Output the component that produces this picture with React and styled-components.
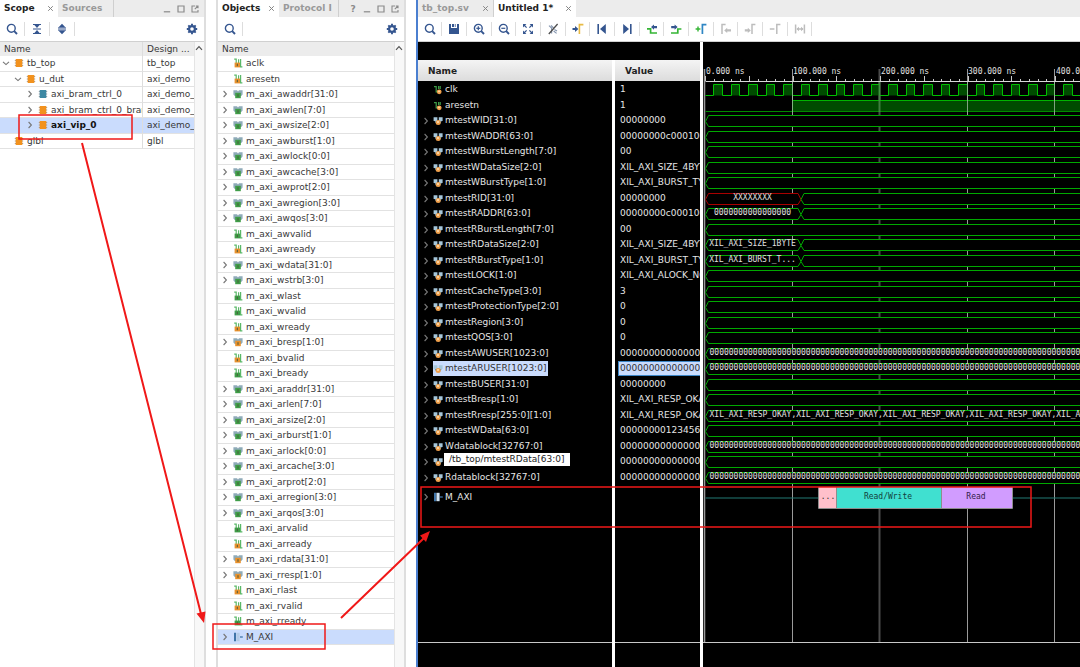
import React, { useState } from "react";
import styled, { createGlobalStyle } from "styled-components";

const scopeRows = [
  { name: "tb_top", unit: "tb_top", level: 0, open: true, expandable: true },
  { name: "u_dut", unit: "axi_demo", level: 1, open: true, expandable: true },
  { name: "axi_bram_ctrl_0", unit: "axi_demo_a", level: 2, expandable: true, color: "#3d88a3" },
  { name: "axi_bram_ctrl_0_bram", unit: "axi_demo_a", level: 2, expandable: true },
  { name: "axi_vip_0", unit: "axi_demo_a", level: 2, expandable: true, bold: true },
  { name: "glbl", unit: "glbl", level: 0 },
];

// [name, direction]
const objectRows = [
  ["aclk", "in"],
  ["aresetn", "in"],
  ["m_axi_awaddr[31:0]", "out"],
  ["m_axi_awlen[7:0]", "out"],
  ["m_axi_awsize[2:0]", "out"],
  ["m_axi_awburst[1:0]", "out"],
  ["m_axi_awlock[0:0]", "out"],
  ["m_axi_awcache[3:0]", "out"],
  ["m_axi_awprot[2:0]", "out"],
  ["m_axi_awregion[3:0]", "out"],
  ["m_axi_awqos[3:0]", "out"],
  ["m_axi_awvalid", "out"],
  ["m_axi_awready", "in"],
  ["m_axi_wdata[31:0]", "out"],
  ["m_axi_wstrb[3:0]", "out"],
  ["m_axi_wlast", "out"],
  ["m_axi_wvalid", "out"],
  ["m_axi_wready", "in"],
  ["m_axi_bresp[1:0]", "in"],
  ["m_axi_bvalid", "in"],
  ["m_axi_bready", "out"],
  ["m_axi_araddr[31:0]", "out"],
  ["m_axi_arlen[7:0]", "out"],
  ["m_axi_arsize[2:0]", "out"],
  ["m_axi_arburst[1:0]", "out"],
  ["m_axi_arlock[0:0]", "out"],
  ["m_axi_arcache[3:0]", "out"],
  ["m_axi_arprot[2:0]", "out"],
  ["m_axi_arregion[3:0]", "out"],
  ["m_axi_arqos[3:0]", "out"],
  ["m_axi_arvalid", "out"],
  ["m_axi_arready", "in"],
  ["m_axi_rdata[31:0]", "in"],
  ["m_axi_rresp[1:0]", "in"],
  ["m_axi_rlast", "in"],
  ["m_axi_rvalid", "in"],
  ["m_axi_rready", "out"],
  ["M_AXI", "intf"],
];

const zeros = "0".repeat(78);
const okays = Array(5).fill("XIL_AXI_RESP_OKAY").join(",");

const waveRows = [
  { name: "clk", value: "1", kind: "clock" },
  { name: "aresetn", value: "1", kind: "level" },
  { name: "mtestWID[31:0]", value: "00000000" },
  { name: "mtestWADDR[63:0]", value: "00000000c000100" },
  { name: "mtestWBurstLength[7:0]", value: "00" },
  { name: "mtestWDataSize[2:0]", value: "XIL_AXI_SIZE_4BYTE" },
  { name: "mtestWBurstType[1:0]", value: "XIL_AXI_BURST_TYP" },
  { name: "mtestRID[31:0]", value: "00000000", first: "XXXXXXXX", unknown: true },
  { name: "mtestRADDR[63:0]", value: "00000000c000100", first: "0000000000000000" },
  { name: "mtestRBurstLength[7:0]", value: "00" },
  { name: "mtestRDataSize[2:0]", value: "XIL_AXI_SIZE_4BYTE", first: "XIL_AXI_SIZE_1BYTE" },
  { name: "mtestRBurstType[1:0]", value: "XIL_AXI_BURST_TYP", first: "XIL_AXI_BURST_T..." },
  { name: "mtestLOCK[1:0]", value: "XIL_AXI_ALOCK_NOL" },
  { name: "mtestCacheType[3:0]", value: "3" },
  { name: "mtestProtectionType[2:0]", value: "0" },
  { name: "mtestRegion[3:0]", value: "0" },
  { name: "mtestQOS[3:0]", value: "0" },
  { name: "mtestAWUSER[1023:0]", value: "00000000000000", text: zeros },
  { name: "mtestARUSER[1023:0]", value: "00000000000000", text: zeros },
  { name: "mtestBUSER[31:0]", value: "00000000" },
  { name: "mtestBresp[1:0]", value: "XIL_AXI_RESP_OKAY" },
  { name: "mtestRresp[255:0][1:0]", value: "XIL_AXI_RESP_OKAY", text: okays },
  { name: "mtestWData[63:0]", value: "00000000123456" },
  { name: "Wdatablock[32767:0]", value: "00000000000000", text: zeros },
  { name: "mtestRData[63:0]", value: "00000000000000", tip: "/tb_top/mtestRData[63:0]" },
  { name: "Rdatablock[32767:0]", value: "00000000000000", text: zeros },
];

const NAVY = "#34558f";
const MUTED = "#bdbdbd";

/* ---------- icons ---------- */

const Svg = ({ size = 12, children }) => (
  <svg width={size} height={size} viewBox={`0 0 ${size} ${size}`} fill="none" aria-hidden="true">
    {children}
  </svg>
);

const SearchIcon = ({ sign }) => (
  <Svg>
    <circle cx="5.3" cy="5.3" r="3.9" stroke={NAVY} strokeWidth="1.4" />
    <path d="M8.2 8.2L11 11" stroke={NAVY} strokeWidth="1.9" />
    {sign && <path d="M3.3 5.3H7.3" stroke={NAVY} strokeWidth="1.2" />}
    {sign === "plus" && <path d="M5.3 3.3V7.3" stroke={NAVY} strokeWidth="1.2" />}
  </Svg>
);

const CollapseIcon = () => (
  <Svg>
    <path d="M2 1.5H10M2 10.5H10M2 6H10" stroke={NAVY} strokeWidth="1.1" />
    <path d="M3.4 2L6 5L8.6 2ZM3.4 10L6 7L8.6 10Z" fill={NAVY} />
  </Svg>
);

const ExpandIcon = () => (
  <Svg>
    <path d="M2 5H10M2 7H10" stroke={NAVY} strokeWidth="1.1" />
    <path d="M2.4 4.6L6 .8L9.6 4.6ZM2.4 7.4L6 11.2L9.6 7.4Z" fill={NAVY} />
  </Svg>
);

const GearIcon = () => (
  <Svg>
    <circle cx="6" cy="6" r="2.9" stroke={NAVY} strokeWidth="2.2" />
    <path
      d="M6 .8V2.6M6 9.4V11.2M.8 6H2.6M9.4 6H11.2M2.3 2.3L3.6 3.6M8.4 8.4L9.7 9.7M2.3 9.7L3.6 8.4M8.4 3.6L9.7 2.3"
      stroke={NAVY}
      strokeWidth="1.9"
    />
  </Svg>
);

const SaveIcon = () => (
  <Svg>
    <path d="M1 1H3V5H9V1H11V11H1Z" fill={NAVY} />
    <path d="M4 1H6.2V4H4ZM7.4 1H8V4H7.4Z" fill={NAVY} />
  </Svg>
);

const FitIcon = () => (
  <Svg>
    <path d="M1 1H4.4L1 4.4ZM11 1V4.4L7.6 1ZM1 11V7.6L4.4 11ZM11 11H7.6L11 7.6Z" fill={NAVY} />
    <path d="M2 2L4.6 4.6M10 2L7.4 4.6M2 10L4.6 7.4M10 10L7.4 7.4" stroke={NAVY} strokeWidth="1.2" />
  </Svg>
);

const UnlinkIcon = () => (
  <Svg>
    <path d="M2 2.6L4.6 5V10.4M4 2.4L6.6 5M6.6 8L9.6 10.4M7.4 6.4L10 8" stroke="#8797b0" strokeWidth="1.2" />
    <path d="M10.6 1L1.8 11" stroke="#4c4c4c" strokeWidth="1.3" />
  </Svg>
);

const GotoCursorIcon = () => (
  <Svg>
    <path d="M.5 5H3V3L6.4 6L3 9V7H.5Z" fill={NAVY} />
    <path d="M7.4 11V1.6H11.4" stroke="#e8bb45" strokeWidth="1.6" />
  </Svg>
);

const FirstIcon = () => (
  <Svg>
    <path d="M2.2 1V11" stroke={NAVY} strokeWidth="1.6" />
    <path d="M9.8 1V11L4 6Z" fill={NAVY} />
  </Svg>
);

const LastIcon = () => (
  <Svg>
    <path d="M9.8 1V11" stroke={NAVY} strokeWidth="1.6" />
    <path d="M2.2 1V11L8 6Z" fill={NAVY} />
  </Svg>
);

const PrevEdgeIcon = () => (
  <Svg>
    <path d="M1 5.8H4.6V10H11" stroke="#35b535" strokeWidth="1.7" />
    <path d="M5 4L8 1.4V3H11V5.2H8V6.8Z" fill={NAVY} />
  </Svg>
);

const NextEdgeIcon = () => (
  <Svg>
    <path d="M1 10H7.8V6H11.4" stroke="#35b535" strokeWidth="1.7" />
    <path d="M7.6 4L4.6 1.4V3H1.2V5.2H4.6V6.8Z" fill={NAVY} />
  </Svg>
);

const AddMarkerIcon = () => (
  <Svg>
    <path d="M.6 6H5.4M3 3.6V8.4" stroke="#35b535" strokeWidth="1.4" />
    <path d="M7.4 11V1.6H11.4" stroke="#2f86c4" strokeWidth="1.7" />
  </Svg>
);

const PrevMarkerIcon = () => (
  <Svg>
    <path d="M2 11V1.6H5.6" stroke={MUTED} strokeWidth="1.5" />
    <path d="M4.2 7.4L7.2 4.8V6.2H11V8.6H7.2V10Z" fill={MUTED} />
  </Svg>
);

const NextMarkerIcon = () => (
  <Svg>
    <path d="M8 11V1.6H11.4" stroke={MUTED} strokeWidth="1.5" />
    <path d="M6.8 7.4L3.8 4.8V6.2H.8V8.6H3.8V10Z" fill={MUTED} />
  </Svg>
);

const RemoveMarkerIcon = () => (
  <Svg>
    <path d="M.8 6H5.4M7.8 11V1.6H11.4" stroke={MUTED} strokeWidth="1.5" />
  </Svg>
);

const SwapIcon = () => (
  <Svg>
    <path d="M1.6 1.6V10.4M10.4 1.6V10.4M3 6H9" stroke={MUTED} strokeWidth="1.5" />
    <path d="M2.4 6L5 3.8V8.2ZM9.6 6L7 3.8V8.2Z" fill={MUTED} />
  </Svg>
);

const CloseIcon = () => (
  <Svg size={7}>
    <path d="M1.2 1.2L5.8 5.8M5.8 1.2L1.2 5.8" stroke="#858585" />
  </Svg>
);

const MinimizeIcon = () => (
  <Svg size={8}>
    <path d="M.8 6.8H7.2" stroke="#8a8a8a" strokeWidth="1.2" />
  </Svg>
);

const MaximizeIcon = () => (
  <Svg size={8}>
    <path d="M1 1H7V7H1Z" stroke="#8a8a8a" strokeWidth="1.2" />
  </Svg>
);

const FloatIcon = () => (
  <Svg size={8}>
    <path d="M4 1H1V7H7V5M3.8 4.2L7 1M4.8 1H7V3.2" stroke="#8a8a8a" strokeWidth="1.1" />
  </Svg>
);

const Chevron = ({ open }) => (
  <Svg size={8}>
    <path d={open ? "M1 2.8L4 5.6L7 2.8" : "M2.6 1L5.4 4L2.6 7"} stroke="#777" strokeWidth="1.1" />
  </Svg>
);

const UpIcon = () => (
  <Svg size={8}>
    <path d="M1 5.8L4 2.6L7 5.8" stroke="#555" strokeWidth="1.2" />
  </Svg>
);

const ChipIcon = ({ color = "#f2921e" }) => (
  <Svg size={10}>
    <path d="M.8 2.5H9.2M.8 5H9.2M.8 7.5H9.2" stroke="#8a8a8a" strokeWidth=".8" />
    <path d="M1.7 1H8.3V9H1.7Z" fill={color} />
  </Svg>
);

const SignalIcon = ({ direction }) => {
  const fill = direction === "out" ? "#3f9d48" : "#e8912d";
  return (
    <Svg size={10}>
      <path d="M1.2 1.2H3.2V5M5.6 5V1.2M7.6 1V8.8H9.4" stroke="#5bb868" strokeWidth="1.2" />
      <path d="M1.6 4.6H7V9.4H1.6Z" fill={fill} />
      <path d="M4.3 5.8V8.2" stroke="#4d5b3b" />
    </Svg>
  );
};

const BusIcon = ({ direction }) => {
  const fill = direction === "out" ? "#3f9d48" : "#e8912d";
  return (
    <Svg size={10}>
      <path d="M.4 1.2H4L5 2.4L6 1.2H9.6V5.4L8.2 7H1.8L.4 5.4Z" fill="#8fabb9" />
      <path d="M2.2 3.8H7.8V9.2H2.2Z" fill={fill} />
      <path d="M5 5.2V7.8" stroke="#4d5b3b" />
    </Svg>
  );
};

const WaveSignalIcon = () => (
  <Svg size={10}>
    <path d="M1 1.6H3.2V7H4.6M5.6 4V1M7.2 1V4" stroke="#3f9d48" strokeWidth="1.2" />
    <circle cx="6.2" cy="6.8" r="2.4" fill="#f0a04b" />
    <circle cx="6" cy="6.4" r=".9" fill="#ffd9a4" />
  </Svg>
);

const WaveBusIcon = () => (
  <Svg size={10}>
    <path d="M.6 1.2H4.4V5H.6ZM5.8 1.2H9.6V5H5.8Z" fill="#a5c6da" />
    <path d="M1.6 5H8.6L7.4 7.6H3Z" fill="#6b93ab" />
    <circle cx="5.2" cy="6.4" r="2.5" fill="#f0a04b" />
    <circle cx="5" cy="6" r="1" fill="#ffe2ba" />
  </Svg>
);

const InterfaceIcon = ({ dark }) => (
  <Svg size={10}>
    <path d="M1 .8H3V9.2H1Z" fill="#3f74a8" />
    <path d="M3.4 .8H6.6V9.2H3.4Z" fill={dark ? "#cfe3f3" : "#b4cbe6"} />
    <path d="M7 5H9.8" stroke="#3f74a8" strokeWidth="1.3" />
  </Svg>
);

const waveTools = [
  ["Search", <SearchIcon />],
  ["Save waveform", <SaveIcon />],
  ["Zoom in", <SearchIcon sign="plus" />],
  ["Zoom out", <SearchIcon sign="minus" />],
  ["Zoom fit", <FitIcon />],
  ["Select area", <UnlinkIcon />],
  ["Go to cursor", <GotoCursorIcon />],
  ["Go to start", <FirstIcon />],
  ["Go to end", <LastIcon />],
  ["Previous transition", <PrevEdgeIcon />],
  ["Next transition", <NextEdgeIcon />],
  ["Add marker", <AddMarkerIcon />],
  ["Previous marker", <PrevMarkerIcon />],
  ["Next marker", <NextMarkerIcon />],
  ["Remove marker", <RemoveMarkerIcon />],
  ["Swap cursors", <SwapIcon />],
];

/* ---------- waveform chart ---------- */

const NS100 = 87.5;
const START = 2.5;
const FIRST_ROW = 40;
const FAR = 2600;
const rowTop = (i) => FIRST_ROW + Math.ceil(i * 15.5) + 2.5;
const crisp = (x) => Math.floor(x) + 0.5;

const Clock = ({ y }) => {
  let d = `M${START} ${y + 11}`;
  for (let x = START + 8; x < FAR; x += 17.5) {
    d += `H${crisp(x)}V${y}H${crisp(x + 8.75)}V${y + 11}`;
  }
  return <path d={d} fill="#004b00" stroke="#00c000" />;
};

const Bus = ({ y, row }) => {
  const swap = START + 95.5;
  const label = row.text || row.first;
  return (
    <g>
      {row.first ? (
        <>
          <path
            d={`M${START + 3} ${y}H${swap - 3}L${swap} ${y + 6}L${swap - 3} ${y + 11}H${START + 3}L${START} ${y + 6}Z`}
            fill="#000"
            stroke={row.unknown ? "#a80000" : "#00a800"}
          />
          <path
            d={`M${FAR} ${y}H${swap + 3}L${swap} ${y + 6}L${swap + 3} ${y + 11}H${FAR}`}
            fill="#000"
            stroke="#00a800"
          />
        </>
      ) : (
        <path
          d={`M${FAR} ${y}H${START + 3}L${START} ${y + 6}L${START + 3} ${y + 11}H${FAR}`}
          fill="#000"
          stroke="#00a800"
        />
      )}
      {label && (
        <text
          x={row.text ? START + 4 : START + 47}
          y={y + 6.5}
          textAnchor={row.text ? "start" : "middle"}
          fill="#e0e0e0"
        >
          {label}
        </text>
      )}
    </g>
  );
};

const WaveChart = () => {
  const marks = Array.from({ length: 28 }, (_, i) => i);
  return (
    <Chart>
      <path d={`M1.5 27V${FAR}`} stroke="#555" strokeWidth="2" />
      {marks.map((i) => {
        const x = Math.floor(START + i * NS100) - 0.5;
        return (
          <line
            key={i}
            x1={x}
            x2={x}
            y1="27"
            y2="100%"
            stroke={i === 2 ? "#4a4a4a" : "#9a9a9a"}
            strokeWidth={i === 2 ? 2 : 1}
          />
        );
      })}
      {marks.map((i) => (
        <text key={i} x={Math.round(START + i * NS100)} y="32" fill="#e0e0e0">
          {`${(i * 100).toFixed(3)} ns`}
        </text>
      ))}
      {Array.from({ length: 280 }, (_, i) => (
        <path
          key={i}
          d={`M${crisp(START + i * 8.75)} ${i % 5 === 0 ? 34 : 37}V39`}
          stroke="#c8c8c8"
        />
      ))}
      <path d={`M${START} 39.5H${FAR}`} stroke="#d8d8d8" />
      {waveRows.map((row, i) => {
        const y = rowTop(i);
        if (row.kind === "clock") return <Clock key={i} y={y} />;
        if (row.kind === "level") {
          const rise = START + 87;
          return (
            <g key={i}>
              <path d={`M${rise} ${y}H${FAR}V${y + 11}H${rise}Z`} fill="#004b00" stroke="#008a00" />
              <path d={`M${START} ${y + 11}H${rise}`} stroke="#008a00" />
              <path d={`M${rise} ${y + 11}V${y}H${FAR}`} stroke="#00b400" fill="none" />
            </g>
          );
        }
        return <Bus key={i} y={y} row={row} />;
      })}
      {[1, 2, 3, 4].map((i) => (
        <path
          key={i}
          d={`M${Math.floor(START + i * NS100) - 0.5} 40V70`}
          stroke={i === 2 ? "#4f8a4f" : "#9fb89f"}
          strokeWidth={i === 2 ? 2 : 1}
          strokeOpacity=".8"
        />
      ))}
      <path d={`M${START} 456H${FAR}`} stroke="#237a74" />
      <path d="M116 445H133V466H116Z" fill="#ffc0cb" />
      <path d="M133 445H238V466H133Z" fill="#40e0d0" />
      <path d="M238 445H309V466H238Z" fill="#d19cff" />
      <path d="M115.5 445V466.5H309.5V445M133.5 445V466M238.5 445V466" stroke="#8d8d8d" fill="none" />
      <text x="125" y="457" textAnchor="middle" fill="#333">...</text>
      <text x="185" y="457" textAnchor="middle" fill="#14403c">Read/Write</text>
      <text x="273" y="457" textAnchor="middle" fill="#33204a">Read</text>
    </Chart>
  );
};

/* ---------- page ---------- */

const WindowButtons = ({ help }) => (
  <ButtonGroup>
    {help && <PlainButton aria-label="Help">?</PlainButton>}
    <PlainButton aria-label="Minimize"><MinimizeIcon /></PlainButton>
    <PlainButton aria-label="Maximize"><MaximizeIcon /></PlainButton>
    <PlainButton aria-label="Float"><FloatIcon /></PlainButton>
  </ButtonGroup>
);

export default function App() {
  const [scopeSelected, setScopeSelected] = useState("axi_vip_0");
  const [objectSelected, setObjectSelected] = useState("M_AXI");
  const [waveSelected, setWaveSelected] = useState("mtestARUSER[1023:0]");

  return (
    <>
      <GlobalStyle />
      <Workspace>
        <Panel>
          <TabBar>
            <Tab $active $width={58}>Scope<CloseIcon /></Tab>
            <Tab $width={56}>Sources</Tab>
            <WindowButtons />
          </TabBar>
          <Toolbar>
            <ToolButton aria-label="Search"><SearchIcon /></ToolButton>
            <ToolButton aria-label="Collapse all"><CollapseIcon /></ToolButton>
            <ToolButton aria-label="Expand all"><ExpandIcon /></ToolButton>
            <SettingsButton aria-label="Settings"><GearIcon /></SettingsButton>
          </Toolbar>
          <Content>
            <Table>
              <colgroup>
                <NameCol />
                <col />
              </colgroup>
              <thead>
                <tr>
                  <HeadCell>Name</HeadCell>
                  <HeadCell>Design ...</HeadCell>
                </tr>
              </thead>
              <tbody>
                {scopeRows.map((row) => (
                  <BodyRow
                    key={row.name}
                    $selected={row.name === scopeSelected}
                    onClick={() => setScopeSelected(row.name)}
                  >
                    <BodyCell>
                      <TreeLabel $level={row.level} $bold={row.bold}>
                        <ChevronSlot>{row.expandable && <Chevron open={row.open} />}</ChevronSlot>
                        <ChipIcon color={row.color} />
                        <span>{row.name}</span>
                      </TreeLabel>
                    </BodyCell>
                    <BodyCell>
                      <UnitLabel>{row.unit}</UnitLabel>
                    </BodyCell>
                  </BodyRow>
                ))}
              </tbody>
            </Table>
            <ScrollTrack><UpIcon /></ScrollTrack>
          </Content>
        </Panel>

        <Panel>
          <TabBar>
            <Tab $active $width={61}>Objects<CloseIcon /></Tab>
            <Tab $width={60}>Protocol I</Tab>
            <WindowButtons help />
          </TabBar>
          <Toolbar>
            <ToolButton aria-label="Search"><SearchIcon /></ToolButton>
            <SettingsButton aria-label="Settings"><GearIcon /></SettingsButton>
          </Toolbar>
          <Content>
            <Table>
              <thead>
                <tr><HeadCell>Name</HeadCell></tr>
              </thead>
              <tbody>
                {objectRows.map(([name, direction]) => {
                  const isBus = name.includes("[");
                  return (
                    <BodyRow
                      key={name}
                      $selected={name === objectSelected}
                      onClick={() => setObjectSelected(name)}
                    >
                      <BodyCell>
                        <ObjectLabel>
                          <ChevronSlot>{(isBus || direction === "intf") && <Chevron />}</ChevronSlot>
                          {direction === "intf" ? (
                            <InterfaceIcon />
                          ) : isBus ? (
                            <BusIcon direction={direction} />
                          ) : (
                            <SignalIcon direction={direction} />
                          )}
                          <span>{name}</span>
                        </ObjectLabel>
                      </BodyCell>
                    </BodyRow>
                  );
                })}
              </tbody>
            </Table>
            <ScrollTrack><UpIcon /></ScrollTrack>
          </Content>
        </Panel>

        <WavePanel>
          <TabBar>
            <Tab $width={76}>tb_top.sv<CloseIcon /></Tab>
            <Tab $active $width={82}>Untitled 1*<CloseIcon /></Tab>
          </TabBar>
          <Toolbar>
            {waveTools.map(([label, icon]) => (
              <WaveButton key={label} aria-label={label}>{icon}</WaveButton>
            ))}
          </Toolbar>
          <WaveBody>
            <SignalPanes>
              <Pane>
                <PaneHead>Name</PaneHead>
                <PaneList>
                  {waveRows.map((row) => (
                    <WaveRow key={row.name} onClick={() => setWaveSelected(row.name)}>
                      <WaveChevron>{!row.kind && <Chevron />}</WaveChevron>
                      <WaveName $selected={row.name === waveSelected}>
                        {row.kind ? <WaveSignalIcon /> : <WaveBusIcon />}
                        {row.name}
                      </WaveName>
                      {row.tip && <Tip role="tooltip">{row.tip}</Tip>}
                    </WaveRow>
                  ))}
                  <InterfaceRow>
                    <WaveChevron><Chevron /></WaveChevron>
                    <WaveName><InterfaceIcon dark />M_AXI</WaveName>
                  </InterfaceRow>
                </PaneList>
              </Pane>
              <Pane>
                <PaneHead>Value</PaneHead>
                <PaneList>
                  {waveRows.map((row) => (
                    <WaveRow key={row.name} onClick={() => setWaveSelected(row.name)}>
                      <WaveValue $selected={row.name === waveSelected}>{row.value}</WaveValue>
                    </WaveRow>
                  ))}
                </PaneList>
              </Pane>
            </SignalPanes>
            <ChartPane>
              <WaveChart />
            </ChartPane>
          </WaveBody>
        </WavePanel>
      </Workspace>

      <Annotations aria-hidden="true">
        <g fill="none" stroke="#f01818" strokeWidth="1.5">
          <path d="M19 115H132V139H19ZM213 624H325V649H213ZM421 487H1031V527H421Z" />
          <path d="M82 143L201 614M341 618L424 538" strokeWidth="2" />
        </g>
        <path d="M204 623L196.5 613.5L205.5 611.5ZM430 531L426 542L420 535.5Z" fill="#f01818" />
      </Annotations>
    </>
  );
}

const GlobalStyle = createGlobalStyle`
  * {
    box-sizing: border-box;
  }
  body {
    margin: 0;
    background: #fff;
    color: #383838;
    font-family: "DejaVu Sans", sans-serif;
    font-size: 9px;
    line-height: 14px;
  }
  button {
    padding: 0;
    border: 0;
    background: none;
    font: inherit;
    color: inherit;
  }
  svg {
    display: block;
    flex: none;
  }
`;

const Workspace = styled.main`
  display: grid;
  grid-template-columns: 206px 190px minmax(0, 1fr);
  column-gap: 10px;
  height: 100vh;
  overflow: hidden;
`;

const Panel = styled.section`
  display: flex;
  flex-direction: column;
  min-width: 0;
  min-height: 0;
  border-right: 2px solid #dedede;

  & + & {
    border-left: 2px solid #dedede;
  }
`;

const WavePanel = styled(Panel)`
  border-right: 0;

  && {
    border-left: 2px solid #4b7fd0;
  }
`;

const TabBar = styled.div`
  display: flex;
  flex: none;
  height: 17px;
  background: #ececec;
`;

const Tab = styled.button`
  display: flex;
  align-items: center;
  justify-content: space-between;
  flex: none;
  width: ${(p) => p.$width}px;
  padding: 0 4px;
  line-height: 13px;
  font-weight: bold;
  white-space: nowrap;
  color: ${(p) => (p.$active ? "#222" : "#999")};
  background: ${(p) => (p.$active ? "#fff" : "transparent")};
  border-right: ${(p) => (p.$active ? "0" : "1px solid #cfcfcf")};
`;

const ButtonGroup = styled.div`
  display: flex;
  align-items: center;
  gap: 6px;
  margin-left: auto;
  padding-right: 5px;
`;

const PlainButton = styled.button`
  width: 8px;
  font-weight: bold;
  color: #8a8a8a;
`;

const Toolbar = styled.div`
  display: flex;
  align-items: center;
  flex: none;
  height: 25px;
  background: #fff;
  border-bottom: 1px solid #d0d0d0;
`;

const ToolButton = styled.button`
  display: flex;
  align-items: center;
  justify-content: center;
  flex: none;
  width: 25px;
  height: 14px;
  border-right: 1px solid #ddd;
`;

const SettingsButton = styled(ToolButton)`
  margin-left: auto;
  border-right: 0;
`;

const WaveButton = styled(ToolButton)`
  &:nth-child(3n + 1) {
    width: 24px;
  }
`;

const Content = styled.div`
  display: grid;
  grid-template-columns: minmax(0, 1fr) 10px;
  flex: 1;
  min-height: 0;
`;

const ScrollTrack = styled.div`
  padding-top: 2px;
  background: #f8f8f8;
  border-left: 1px solid #e4e4e4;
`;

const Table = styled.table`
  width: 100%;
  table-layout: fixed;
  border-collapse: separate;
  border-spacing: 0;
  align-self: start;
`;

const NameCol = styled.col`
  width: 142px;
`;

const HeadCell = styled.th`
  height: 14px;
  padding: 0 4px;
  overflow: hidden;
  text-align: left;
  font-weight: normal;
  background: #ececec;

  & + & {
    border-left: 1px solid #ddd;
  }
`;

const BodyCell = styled.td`
  padding: 0;
  overflow: hidden;
  vertical-align: top;
  white-space: nowrap;
  border-bottom: 1px solid #e2e2e2;

  & + & {
    border-left: 1px solid #ddd;
  }
`;

const BodyRow = styled.tr`
  height: 16px;
  cursor: default;
  background: ${(p) => (p.$selected ? "#cadcfd" : "#fff")};

  &:nth-child(even) {
    height: 15px;
  }
`;

const TreeLabel = styled.div`
  display: flex;
  align-items: center;
  padding-left: ${(p) => 2 + p.$level * 12}px;
  font-weight: ${(p) => (p.$bold ? "bold" : "normal")};
  color: ${(p) => (p.$bold ? "#111" : "inherit")};

  span:last-child {
    margin-left: 3px;
  }
`;

const ObjectLabel = styled(TreeLabel).attrs({ $level: 0 })`
  padding-left: 3px;
`;

const UnitLabel = styled.div`
  padding-left: 4px;
`;

const ChevronSlot = styled.span`
  width: 12px;
  flex: none;
`;

const WaveBody = styled.div`
  display: grid;
  grid-template-columns: 282px minmax(0, 1fr);
  flex: 1;
  min-height: 0;
  background: #000;
`;

const SignalPanes = styled.div`
  display: grid;
  grid-template-columns: 194px minmax(0, 1fr);
  column-gap: 3px;
  min-height: 0;
  background: #fff;
  border-top: 18px solid #000;
`;

const Pane = styled.div`
  display: flex;
  flex-direction: column;
  min-width: 0;
  min-height: 0;
  padding-bottom: 24px;
  background: #000;
`;

const PaneHead = styled.div`
  display: flex;
  align-items: center;
  flex: none;
  height: 21px;
  padding-left: 10px;
  font-weight: bold;
  color: #222;
  background: linear-gradient(#f4f4f4, #dcdcdc);
`;

const PaneList = styled.ul`
  flex: 1;
  min-height: 0;
  margin: 0;
  padding: 1px 0 0;
  list-style: none;
  overflow: hidden;
  color: #e6e6e6;
  border-bottom: 1px solid #c8c8c8;
`;

const WaveRow = styled.li`
  position: relative;
  display: flex;
  align-items: flex-start;
  height: 16px;
  white-space: nowrap;
  cursor: default;

  &:nth-child(even) {
    height: 15px;
  }
`;

const InterfaceRow = styled(WaveRow)`
  align-items: center;

  && {
    height: 24px;
  }
`;

const WaveChevron = styled.span`
  display: flex;
  align-items: center;
  flex: none;
  width: 15px;
  height: 15px;
  padding-left: 4px;
`;

const WaveName = styled.span`
  display: flex;
  align-items: center;
  gap: 2px;
  padding-right: 2px;
  line-height: 13px;
  color: ${(p) => (p.$selected ? "#333" : "inherit")};
  background: ${(p) => (p.$selected ? "#cadcfd" : "transparent")};
  border: solid transparent;
  border-width: 1px 0;
`;

const WaveValue = styled.span`
  flex: 1;
  min-width: 0;
  margin-left: 3px;
  padding-left: 1px;
  overflow: hidden;
  line-height: 13px;
  color: ${(p) => (p.$selected ? "#333" : "inherit")};
  background: ${(p) => (p.$selected ? "#cadcfd" : "transparent")};
  border: 1px solid ${(p) => (p.$selected ? "#3d86c6" : "transparent")};
  border-right: 0;
`;

const Tip = styled.span`
  position: absolute;
  top: -1px;
  left: 26px;
  padding: 0 5px;
  line-height: 13px;
  color: #222;
  background: #fff;
`;

const ChartPane = styled.div`
  display: flex;
  flex-direction: column;
  min-width: 0;
  min-height: 0;
  padding-bottom: 24px;
  border-left: 3px solid #fff;
`;

const Chart = styled.svg`
  flex: 1;
  width: 100%;
  min-height: 0;
  overflow: hidden;
  font-family: "DejaVu Sans Mono", monospace;
  font-size: 8px;
  border-bottom: 1px solid #c8c8c8;
`;

const Annotations = styled.svg`
  position: absolute;
  top: 0;
  left: 0;
  width: 100%;
  height: 100%;
  pointer-events: none;
`;
